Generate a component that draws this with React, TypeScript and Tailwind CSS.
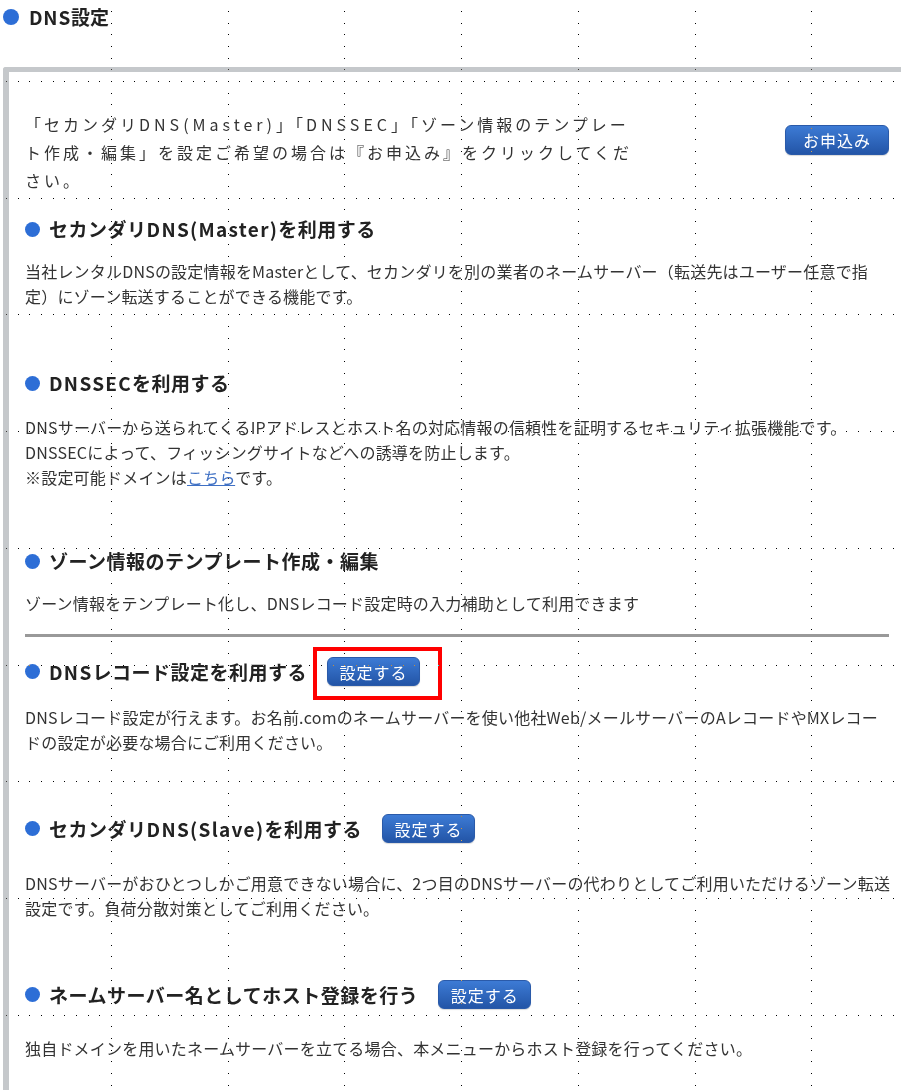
import React from 'react';

// dotted guide grid laid over the page (drawn with difference blending)
const GRID = 116.7;
const DOT = GRID / 10;

const gridPath = (() => {
  let d = '';
  for (let k = -1; k < 10; k++) {
    const y = Math.round(81 + k * GRID);
    for (let j = -10; j < 80; j++) {
      const x = Math.round(111 + j * DOT);
      if (x >= 0 && x <= 901 && y >= 0) d += `M${x} ${y}h1v1h-1z`;
    }
  }
  for (let k = -1; k < 8; k++) {
    const x = Math.round(111 + k * GRID);
    for (let j = -8; j < 96; j++) {
      const y = Math.round(81 + j * DOT);
      if (x >= 0 && y >= 0 && y <= 1100) d += `M${x} ${y}h1v1h-1z`;
    }
  }
  return d;
})();

const Bullet = () => <span className="inline-block h-[15px] w-[15px] shrink-0 rounded-full bg-[#2d6ed6]" />;

// latin runs are a touch wider in the original font
const L = ({ children, className = 'tracking-[1.3px]' }: { children: React.ReactNode; className?: string }) => (
  <span className={className}>{children}</span>
);

const BlueButton = ({ label, className = '' }: { label: string; className?: string }) => (
  <button
    type="button"
    className={`flex shrink-0 items-center justify-center rounded-[6px] border border-[#2a5aa9] bg-linear-to-b from-[#3d7bd5] to-[#2355a7] text-[16px] tracking-[1px] text-white shadow-[0_1px_1px_rgba(0,0,0,0.15)] ${className}`}
  >
    {label}
  </button>
);

const Heading = ({ children }: { children: React.ReactNode }) => (
  <div className="flex h-[28px] items-center gap-[9px]">
    <Bullet />
    <h3 className="text-[19px] font-bold leading-[28px] tracking-[0.5px] text-[#222]">{children}</h3>
  </div>
);

const Desc = ({ children, className = '' }: { children: React.ReactNode; className?: string }) => (
  <p className={`whitespace-nowrap text-[16px] leading-[25px] tracking-[0.2px] text-[#333] ${className}`}>{children}</p>
);

export default function App() {
  return (
    <div className="relative isolate min-h-[1090px] w-[901px] overflow-hidden bg-white font-['Noto_Sans_CJK_JP','Liberation_Sans',sans-serif]">
      {/* page title */}
      <div className="flex h-[34px] items-center gap-[10px] pl-[3px]">
        <span className="inline-block h-[16px] w-[16px] rounded-full bg-[#2d6ed6]" />
        <h2 className="text-[19px] font-bold text-[#222]">
          <L className="tracking-[0.8px]">DNS</L>設定
        </h2>
      </div>

      <div className="ml-[3px] mt-[33px] rounded-tl-[3px] border-l-[6px] border-t-[5px] border-[#c5c8cb] pb-[40px] pl-[16px] pr-[12px] pt-[38px]">
        {/* intro */}
        <div className="flex items-start justify-between">
          <p className="w-[660px] text-[16px] leading-[28px] tracking-[3px] text-[#333]">
            「セカンダリ<L className="tracking-[4px]">DNS(Master)</L>」「<L className="tracking-[4px]">DNSSEC</L>」「ゾーン情報のテンプレー
            <br />
            ト作成・編集」を設定ご希望の場合は『お申込み』をクリックしてくだ
            <br />
            さい。
          </p>
          <BlueButton label="お申込み" className="mt-[15px] h-[30px] w-[104px]" />
        </div>

        {/* secondary master */}
        <div className="mt-[21px]">
          <Heading>
            セカンダリ<L>DNS(Master)</L>を利用する
          </Heading>
          <Desc className="mt-[16px]">
            当社レンタルDNSの設定情報をMasterとして、セカンダリを別の業者のネームサーバー（転送先はユーザー任意で指
            <br />
            定）にゾーン転送することができる機能です。
          </Desc>
        </div>

        {/* dnssec */}
        <div className="mt-[60px]">
          <Heading>
            <L>DNSSEC</L>を利用する
          </Heading>
          <Desc className="mt-[18px]">
            DNSサーバーから送られてくるIPアドレスとホスト名の対応情報の信頼性を証明するセキュリティ拡張機能です。
            <br />
            DNSSECによって、フィッシングサイトなどへの誘導を防止します。
            <br />
            ※設定可能ドメインは
            <a href="#" className="text-[#3f70c4] underline">
              こちら
            </a>
            です。
          </Desc>
        </div>

        {/* zone template */}
        <div className="mt-[57px]">
          <Heading>ゾーン情報のテンプレート作成・編集</Heading>
          <Desc className="mt-[16px]">ゾーン情報をテンプレート化し、DNSレコード設定時の入力補助として利用できます</Desc>
        </div>

        <hr className="mt-[18px] h-[3px] border-0 bg-[#999]" />

        {/* dns record */}
        <div className="mt-[20px]">
          <div className="flex items-center gap-[20px]">
            <Heading>
              <L>DNS</L>レコード設定を利用する
            </Heading>
            <div className="relative">
              <BlueButton label="設定する" className="h-[29px] w-[93px]" />
              <span className="pointer-events-none absolute -bottom-[14px] -left-[14px] -right-[22px] -top-[10px] border-4 border-[#ff0000]" />
            </div>
          </div>
          <Desc className="mt-[19px]">
            DNSレコード設定が行えます。お名前.comのネームサーバーを使い他社Web/メールサーバーのAレコードやMXレコー
            <br />
            ドの設定が必要な場合にご利用ください。
          </Desc>
        </div>

        {/* secondary slave */}
        <div className="mt-[59px]">
          <div className="flex items-center gap-[20px]">
            <Heading>
              セカンダリ<L>DNS(Slave)</L>を利用する
            </Heading>
            <BlueButton label="設定する" className="h-[29px] w-[93px]" />
          </div>
          <Desc className="mt-[28px]">
            DNSサーバーがおひとつしかご用意できない場合に、2つ目のDNSサーバーの代わりとしてご利用いただけるゾーン転送
            <br />
            設定です。負荷分散対策としてご利用ください。
          </Desc>
        </div>

        {/* host registration */}
        <div className="mt-[59px]">
          <div className="flex items-center gap-[20px]">
            <Heading>ネームサーバー名としてホスト登録を行う</Heading>
            <BlueButton label="設定する" className="h-[29px] w-[93px]" />
          </div>
          <Desc className="mt-[27px]">独自ドメインを用いたネームサーバーを立てる場合、本メニューからホスト登録を行ってください。</Desc>
        </div>
      </div>

      <svg className="pointer-events-none absolute inset-0 h-full w-full mix-blend-difference" aria-hidden="true">
        <path d={gridPath} fill="#fff" shapeRendering="crispEdges" />
      </svg>
    </div>
  );
}
